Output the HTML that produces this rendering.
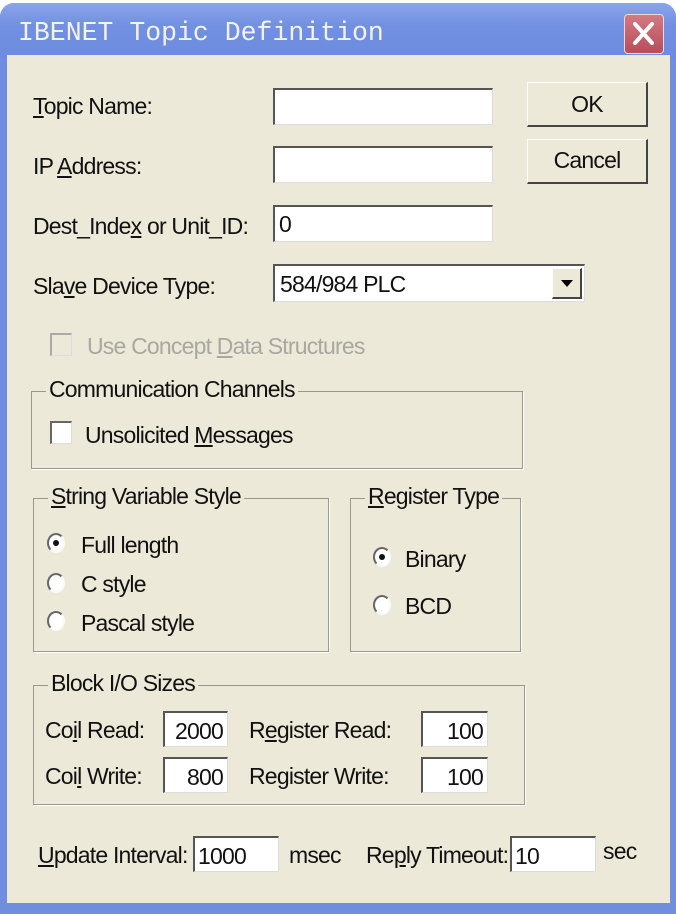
<!DOCTYPE html>
<html><head><meta charset="utf-8"><style>
*{margin:0;padding:0;box-sizing:border-box}
body{width:676px;height:914px;background:#fff;position:relative;overflow:hidden;font-family:"Liberation Sans Narrow","Liberation Sans",sans-serif;font-size:23px;color:#111;letter-spacing:-0.8px}
.win{position:absolute;left:0;top:3px;width:676px;height:911px;background:#6f8ee0;border-radius:14px 14px 0 0}
.title{position:absolute;left:0;top:0;width:676px;height:56px;border-radius:14px 14px 0 0;background:linear-gradient(#8aa5ea,#7290e2 40%,#6d8cdf)}
.ttext{position:absolute;left:18px;top:15px;font-family:"Liberation Mono",monospace;font-size:26.5px;color:#f4f2ee;letter-spacing:0}
.close{position:absolute;left:624px;top:11px;width:40px;height:40px;border-radius:4px;background:linear-gradient(#d27a82,#b94d5a);border:1.5px solid #f0d6d6}
.client{position:absolute;left:7px;top:55px;width:663px;height:848px;background:#ece9d8}
.a{position:absolute;white-space:nowrap;line-height:1}
.in{position:absolute;background:#fff;border-top:2px solid #555;border-left:2px solid #555;border-right:1px solid #ddd;border-bottom:1px solid #ddd;line-height:1}
.btn{position:absolute;background:#ece9d8;border:1px solid #fff;border-right:2px solid #444;border-bottom:2px solid #444;text-align:center}
.grp{position:absolute;border:1px solid #9a9a8c;box-shadow:1px 1px 0 #fff}
.leg{position:absolute;background:#ece9d8;padding:0 3px;top:-14px;white-space:nowrap;line-height:1}
.cb{position:absolute;width:22px;height:23px;background:#fff;border-top:2px solid #666;border-left:2px solid #666;border-right:1px solid #ddd;border-bottom:1px solid #ddd}
.rb{position:absolute;width:18px;height:20px;border-radius:50%;border-left:2px solid #666;border-top:2px solid #666;border-right:2px solid #fafafa;border-bottom:2px solid #fafafa;background:#fff}
.dot{position:absolute;left:4px;top:5px;width:6px;height:6px;border-radius:50%;background:#111}
u{text-decoration:underline}
</style></head><body>
<div class="win">
 <div class="title"><div class="ttext">IBENET Topic Definition</div>
  <div class="close"><svg width="37" height="37" viewBox="0 0 37 37"><path d="M10 9 L27 28 M27 9 L10 28" stroke="#fff" stroke-width="4" stroke-linecap="round"/></svg></div>
 </div>
</div>
<div class="client"></div>

<div class="a" style="left:33px;top:95px"><u>T</u>opic Name:</div>
<div class="in" style="left:273px;top:88px;width:220px;height:37px"></div>
<div class="btn" style="left:527px;top:82px;width:121px;height:45px;line-height:42px">OK</div>

<div class="a" style="left:33px;top:155px">IP <u>A</u>ddress:</div>
<div class="in" style="left:273px;top:146px;width:220px;height:37px"></div>
<div class="btn" style="left:527px;top:139px;width:121px;height:45px;line-height:40px">Cancel</div>

<div class="a" style="left:33px;top:215px">Dest_Inde<u>x</u> or Unit_ID:</div>
<div class="in" style="left:273px;top:205px;width:220px;height:37px;padding:6px 0 0 4px">0</div>

<div class="a" style="left:33px;top:275px">Sla<u>v</u>e Device Type:</div>
<div class="in" style="left:273px;top:264px;width:312px;height:38px;padding:7px 0 0 5px">584/984 PLC
 <div style="position:absolute;right:2px;top:2px;width:30px;height:31px;background:#ece9d8;border:1px solid #fff;border-right:2px solid #444;border-bottom:2px solid #444"><svg width="28" height="28"><path d="M8 11 H20 L14 18 Z" fill="#000"/></svg></div>
</div>

<div class="cb" style="left:50px;top:333px;background:#ece9d8;border-color:#aaa #ddd #ddd #aaa"></div>
<div class="a" style="left:87px;top:335px;color:#a8a8a0">Use Concept <u>D</u>ata Structures</div>

<div class="grp" style="left:31px;top:391px;width:492px;height:78px"><div class="leg" style="left:14px">Communication Channels</div></div>
<div class="cb" style="left:50px;top:421px"></div>
<div class="a" style="left:85px;top:424px">Unsolicited <u>M</u>essages</div>

<div class="grp" style="left:33px;top:498px;width:296px;height:154px"><div class="leg" style="left:14px"><u>S</u>tring Variable Style</div></div>
<div class="rb" style="left:47px;top:533px"><div class="dot"></div></div>
<div class="a" style="left:81px;top:534px">Full length</div>
<div class="rb" style="left:47px;top:573px"></div>
<div class="a" style="left:81px;top:573px">C style</div>
<div class="rb" style="left:47px;top:611px"></div>
<div class="a" style="left:81px;top:612px">Pascal style</div>

<div class="grp" style="left:350px;top:498px;width:171px;height:154px"><div class="leg" style="left:14px"><u>R</u>egister Type</div></div>
<div class="rb" style="left:373px;top:547px"><div class="dot"></div></div>
<div class="a" style="left:405px;top:548px">Binary</div>
<div class="rb" style="left:373px;top:595px"></div>
<div class="a" style="left:405px;top:595px">BCD</div>

<div class="grp" style="left:33px;top:685px;width:492px;height:120px"><div class="leg" style="left:14px">Block I/O Sizes</div></div>
<div class="a" style="left:45px;top:719px">Co<u>i</u>l Read:</div>
<div class="in" style="left:163px;top:711px;width:65px;height:36px;text-align:right;padding:7px 4px 0 0">2000</div>
<div class="a" style="left:249px;top:719px">R<u>e</u>gister Read:</div>
<div class="in" style="left:421px;top:711px;width:67px;height:36px;text-align:right;padding:7px 4px 0 0">100</div>
<div class="a" style="left:45px;top:765px">Coi<u>l</u> Write:</div>
<div class="in" style="left:163px;top:757px;width:65px;height:36px;text-align:right;padding:7px 4px 0 0">800</div>
<div class="a" style="left:249px;top:765px">Re<u>g</u>ister Write:</div>
<div class="in" style="left:421px;top:757px;width:67px;height:36px;text-align:right;padding:7px 4px 0 0">100</div>

<div class="a" style="left:38px;top:844px"><u>U</u>pdate Interval:</div>
<div class="in" style="left:193px;top:836px;width:86px;height:36px;padding:7px 0 0 3px">1000</div>
<div class="a" style="left:289px;top:844px">msec</div>
<div class="a" style="left:366px;top:844px">Re<u>p</u>ly Timeout:</div>
<div class="in" style="left:510px;top:836px;width:86px;height:36px;padding:7px 0 0 3px">10</div>
<div class="a" style="left:603px;top:840px">sec</div>
</body></html>
